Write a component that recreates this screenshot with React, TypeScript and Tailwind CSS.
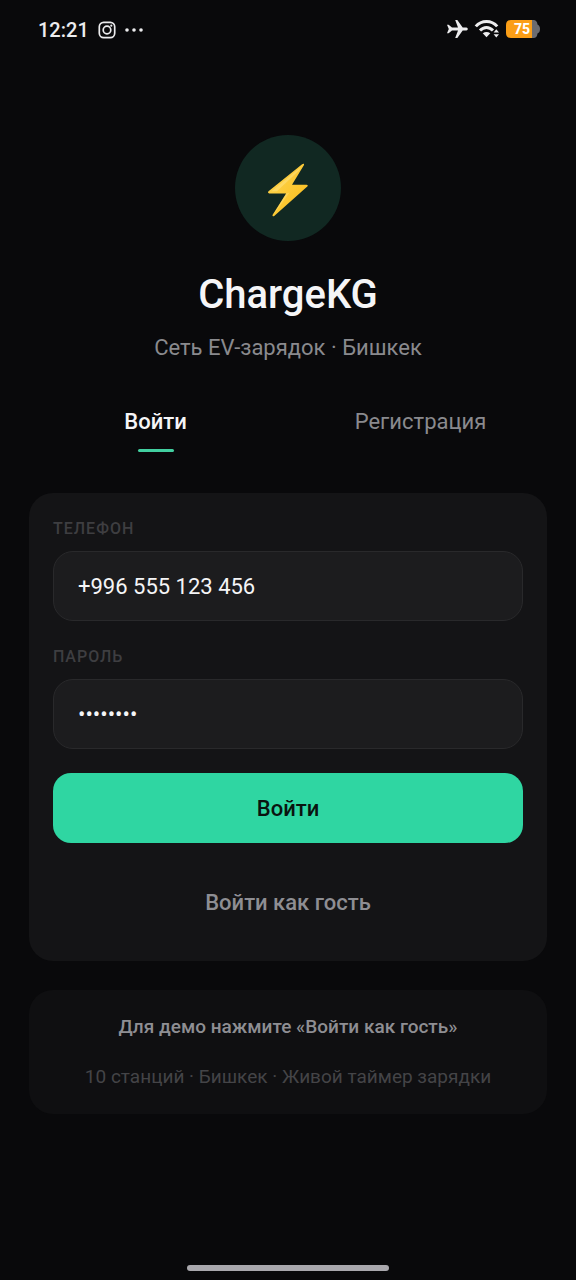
import { useState } from "react";

type Tab = "login" | "register";

const tabs: { id: Tab; label: string }[] = [
  { id: "login", label: "Войти" },
  { id: "register", label: "Регистрация" },
];

function StatusBar() {
  return (
    <header className="flex h-[58px] items-center justify-between pr-9 pl-[38px] text-[#ececee]">
      <div className="flex items-center gap-[9px] pt-px">
        <span className="text-[20px] leading-6 font-medium">12:21</span>
        <svg className="size-[18px]" viewBox="0 0 18 18" fill="none" stroke="currentColor" strokeWidth="1.7" aria-hidden="true">
          <rect x="1.3" y="1.3" width="15.4" height="15.4" rx="4.4" />
          <circle cx="9" cy="9" r="3.8" />
          <circle cx="13.3" cy="4.7" r="1.1" fill="currentColor" stroke="none" />
        </svg>
        <svg className="h-1 w-[18px]" viewBox="0 0 18 4" fill="currentColor" aria-hidden="true">
          <circle cx="2" cy="2" r="1.8" />
          <circle cx="9" cy="2" r="1.8" />
          <circle cx="16" cy="2" r="1.8" />
        </svg>
      </div>
      <div className="flex items-center gap-[6px]">
        <svg className="h-5 w-[22px]" viewBox="0 0 22 20" fill="currentColor" aria-hidden="true">
          <path d="M1 5.800H2.600L6 8.600H12L9.200 1H11.300L16.700 8.600H20.400Q21.800 8.800 21.800 10T20.400 11.400H16.700L11.300 19H9.200L12 11.400H6L2.600 14.200H1L2.800 10Z" />
        </svg>
        <svg className="h-5 w-[26px]" viewBox="0 0 26 20" aria-hidden="true">
          <g fill="none" stroke="currentColor" strokeWidth="3">
            <path d="M1.800 7.400C7.500.700 17.500.700 23.200 7.400" />
            <path d="M6 11.500C9.800 7.400 15.200 7.400 19 11.500" />
          </g>
          <path d="M8.700 14.200Q12.500 11.800 16.300 14.200L12.500 18.200Z" fill="currentColor" />
          <path d="M22.300 10.300 25 13.600H19.600ZM22.300 18.500 25 15.200H19.600Z" fill="currentColor" />
        </svg>
        <svg className="h-[18px] w-[34px]" viewBox="0 0 34 18" aria-label="75%">
          <path d="M26 0H27.500Q31 0 31.500 4.500Q34 5.500 34 9T31.500 13.500Q31 18 27.500 18H26Z" fill="#6b6b70" />
          <path d="M5 0H26V18H5Q0 18 0 13V5Q0 0 5 0Z" fill="#fb9e17" />
          <text x="16" y="14" textAnchor="middle" fontSize="14" fontWeight="800" fill="#fff">75</text>
        </svg>
      </div>
    </header>
  );
}

function Bolt() {
  return (
    <svg className="h-[54px] w-[42px]" viewBox="0 0 42 54" aria-hidden="true">
      <defs>
        <linearGradient id="bolt" x1="0" y1="0" x2="1" y2="1">
          <stop offset="0.2" stopColor="#fdd148" />
          <stop offset="0.65" stopColor="#fbc52c" />
          <stop offset="1" stopColor="#f5b020" />
        </linearGradient>
      </defs>
      <path
        d="M36.200.8Q37.400.6 37 2L25 21.700H39.500Q41.500 22 40.300 23.500L7.200 53Q5.300 54 5.500 52L19.200 30.400H2.200Q.3 30 1.500 28.300L34.800 1.500Z"
        fill="url(#bolt)"
      />
      <path d="M33.500 4.200 4.500 28.200H10L32 7.500Z" fill="#fee07a" opacity=".6" />
      <path d="M19.200 30.400 5.800 52.200 9 48.500 22.500 29.500Z" fill="#fee07a" opacity=".5" />
    </svg>
  );
}

type FieldProps = {
  id: string;
  label: string;
  type: string;
  value: string;
  onChange: (value: string) => void;
};

function Field({ id, label, type, value, onChange }: FieldProps) {
  return (
    <div className="flex flex-col gap-3">
      <label htmlFor={id} className="text-base leading-5 font-medium tracking-[1px] text-[#3e3e41] uppercase">
        {label}
      </label>
      <input
        id={id}
        type={type}
        value={value}
        onChange={(e) => onChange(e.target.value)}
        className="h-[70px] w-full rounded-[20px] border border-[#29292b] bg-[#1c1c1e] px-6 text-[22px] text-[#f5f5f7] outline-none"
      />
    </div>
  );
}

export default function App() {
  const [tab, setTab] = useState<Tab>("login");
  const [phone, setPhone] = useState("+996 555 123 456");
  const [password, setPassword] = useState("password");

  return (
    <div className="flex min-h-screen flex-col bg-[#09090b] font-['Roboto',sans-serif] text-[#f5f5f7]">
      <StatusBar />

      <main className="flex flex-col px-[29px] pt-[77px]">
        <div className="flex flex-col items-center text-center">
          <div className="flex size-[106px] items-center justify-center rounded-full bg-[#112822] pt-1">
            <Bolt />
          </div>
          <h1 className="mt-[30px] text-[40px] leading-[48px] font-medium">ChargeKG</h1>
          <p className="mt-[15px] text-[22px] leading-7 text-[#8a8a8e]">Сеть EV-зарядок · Бишкек</p>
        </div>

        <div role="tablist" className="mt-[47px] grid grid-cols-2 gap-3">
          {tabs.map(({ id, label }) => (
            <button
              key={id}
              type="button"
              role="tab"
              aria-selected={tab === id}
              onClick={() => setTab(id)}
              className={
                tab === id
                  ? "flex flex-col items-center gap-[14px] text-[22px] leading-[26px] font-medium"
                  : "flex flex-col items-center gap-[14px] text-[22px] leading-[26px] text-[#8a8a8e]"
              }
            >
              {label}
              <span className={tab === id ? "h-[3px] w-9 rounded-full bg-[#42cfa0]" : "h-[3px] w-9"} />
            </button>
          ))}
        </div>

        <form className="mt-[41px] flex flex-col rounded-3xl bg-[#141416] px-6 pt-[26px] pb-6" onSubmit={(e) => e.preventDefault()}>
          <div className="flex flex-col gap-[26px]">
            <Field id="phone" label="Телефон" type="tel" value={phone} onChange={setPhone} />
            <Field id="password" label="Пароль" type="password" value={password} onChange={setPassword} />
          </div>
          <button type="submit" className="mt-6 h-[70px] rounded-[18px] bg-[#2fd6a2] text-[22px] font-medium text-[#0a1410]">
            Войти
          </button>
          <button type="button" className="mt-6 h-[70px] rounded-[18px] text-[22px] font-medium text-[#8e8e93]">
            Войти как гость
          </button>
        </form>

        <section className="mt-[29px] flex flex-col gap-6 rounded-3xl bg-[#0f0f11] px-6 py-6 text-center text-[19px] leading-[26px]">
          <p className="font-medium text-[#8e8e93]">Для демо нажмите «Войти как гость»</p>
          <p className="text-[#444447]">10 станций · Бишкек · Живой таймер зарядки</p>
        </section>
      </main>

      <footer className="mt-auto flex justify-center pt-6 pb-[9px]">
        <div className="h-[6px] w-[202px] rounded-full bg-[#a9a8ad]" />
      </footer>
    </div>
  );
}
